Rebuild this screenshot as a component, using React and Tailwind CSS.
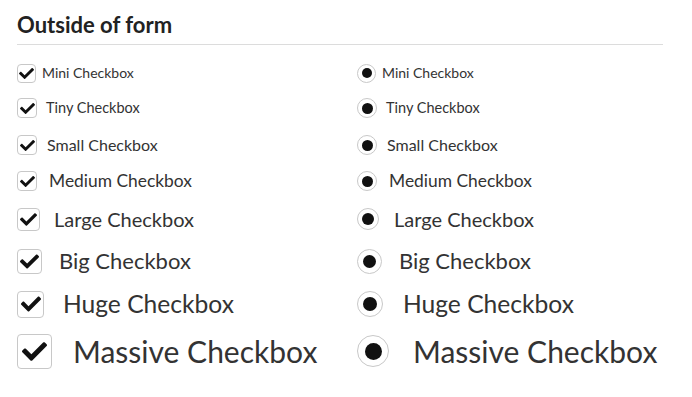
import React from "react";

const sizes = [
  { name: "Mini", font: 14, box: 19, radio: 19, check: 15, offset: 25, row: 34 },
  { name: "Tiny", font: 14.5, box: 20, radio: 20, check: 15, offset: 29, row: 36 },
  { name: "Small", font: 16, box: 20, radio: 20, check: 15, offset: 30, row: 38 },
  { name: "Medium", font: 17.4, box: 20, radio: 20, check: 15, offset: 32, row: 34 },
  { name: "Large", font: 20, box: 23, radio: 22, check: 17, offset: 37, row: 42 },
  { name: "Big", font: 22, box: 25, radio: 25, check: 19, offset: 42, row: 42 },
  { name: "Huge", font: 24.6, box: 27, radio: 26, check: 20, offset: 46, row: 44 },
  { name: "Massive", font: 30, box: 35, radio: 32, check: 25, offset: 56, row: 50 },
];

function CheckIcon({ w }) {
  return (
    <svg width={w} height={w} viewBox="0 0 512 512" fill="currentColor">
      <path d="M173.898 439.404l-166.4-166.4c-9.997-9.997-9.997-26.206 0-36.204l36.203-36.204c9.997-9.998 26.207-9.998 36.204 0L192 312.69 432.095 72.596c9.997-9.997 26.207-9.997 36.204 0l36.203 36.204c9.997 9.997 9.997 26.206 0 36.204l-294.4 294.401c-9.998 9.997-26.207 9.997-36.204-.001z" />
    </svg>
  );
}

function Item({ s, radio }) {
  const size = radio ? s.radio : s.box;
  return (
    <div className="flex items-center" style={{ height: s.row }}>
      {radio ? (
        <div
          className="flex items-center justify-center rounded-full border border-[#c8c8c8] bg-white shrink-0"
          style={{ width: size, height: size }}
        >
          <div
            className="rounded-full bg-[#111]"
            style={{ width: Math.round(size * 0.53), height: Math.round(size * 0.53) }}
          />
        </div>
      ) : (
        <div
          className="flex items-center justify-center rounded-[4px] border border-[#c8c8c8] bg-white text-[#111] shrink-0"
          style={{ width: size, height: size }}
        >
          <CheckIcon w={s.check} />
        </div>
      )}
      <span
        className="text-[#333] leading-none whitespace-nowrap"
        style={{ fontSize: s.font, marginLeft: s.offset - size }}
      >
        {s.name} Checkbox
      </span>
    </div>
  );
}

export default function App() {
  return (
    <div className="w-[692px] h-[397px] bg-white px-[17px] pt-[11px] font-['Lato','Liberation_Sans',sans-serif]">
      <div className="w-[646px] border-b border-[#dcdcdc] pb-[6px]">
        <h4 className="text-[22px] font-bold text-[#222] leading-[27px]">Outside of form</h4>
      </div>
      <div className="grid grid-cols-[340px_306px] pt-[11px]">
        <div className="flex flex-col">
          {sizes.map((s) => (
            <Item key={s.name} s={s} />
          ))}
        </div>
        <div className="flex flex-col">
          {sizes.map((s) => (
            <Item key={s.name} s={s} radio />
          ))}
        </div>
      </div>
    </div>
  );
}
